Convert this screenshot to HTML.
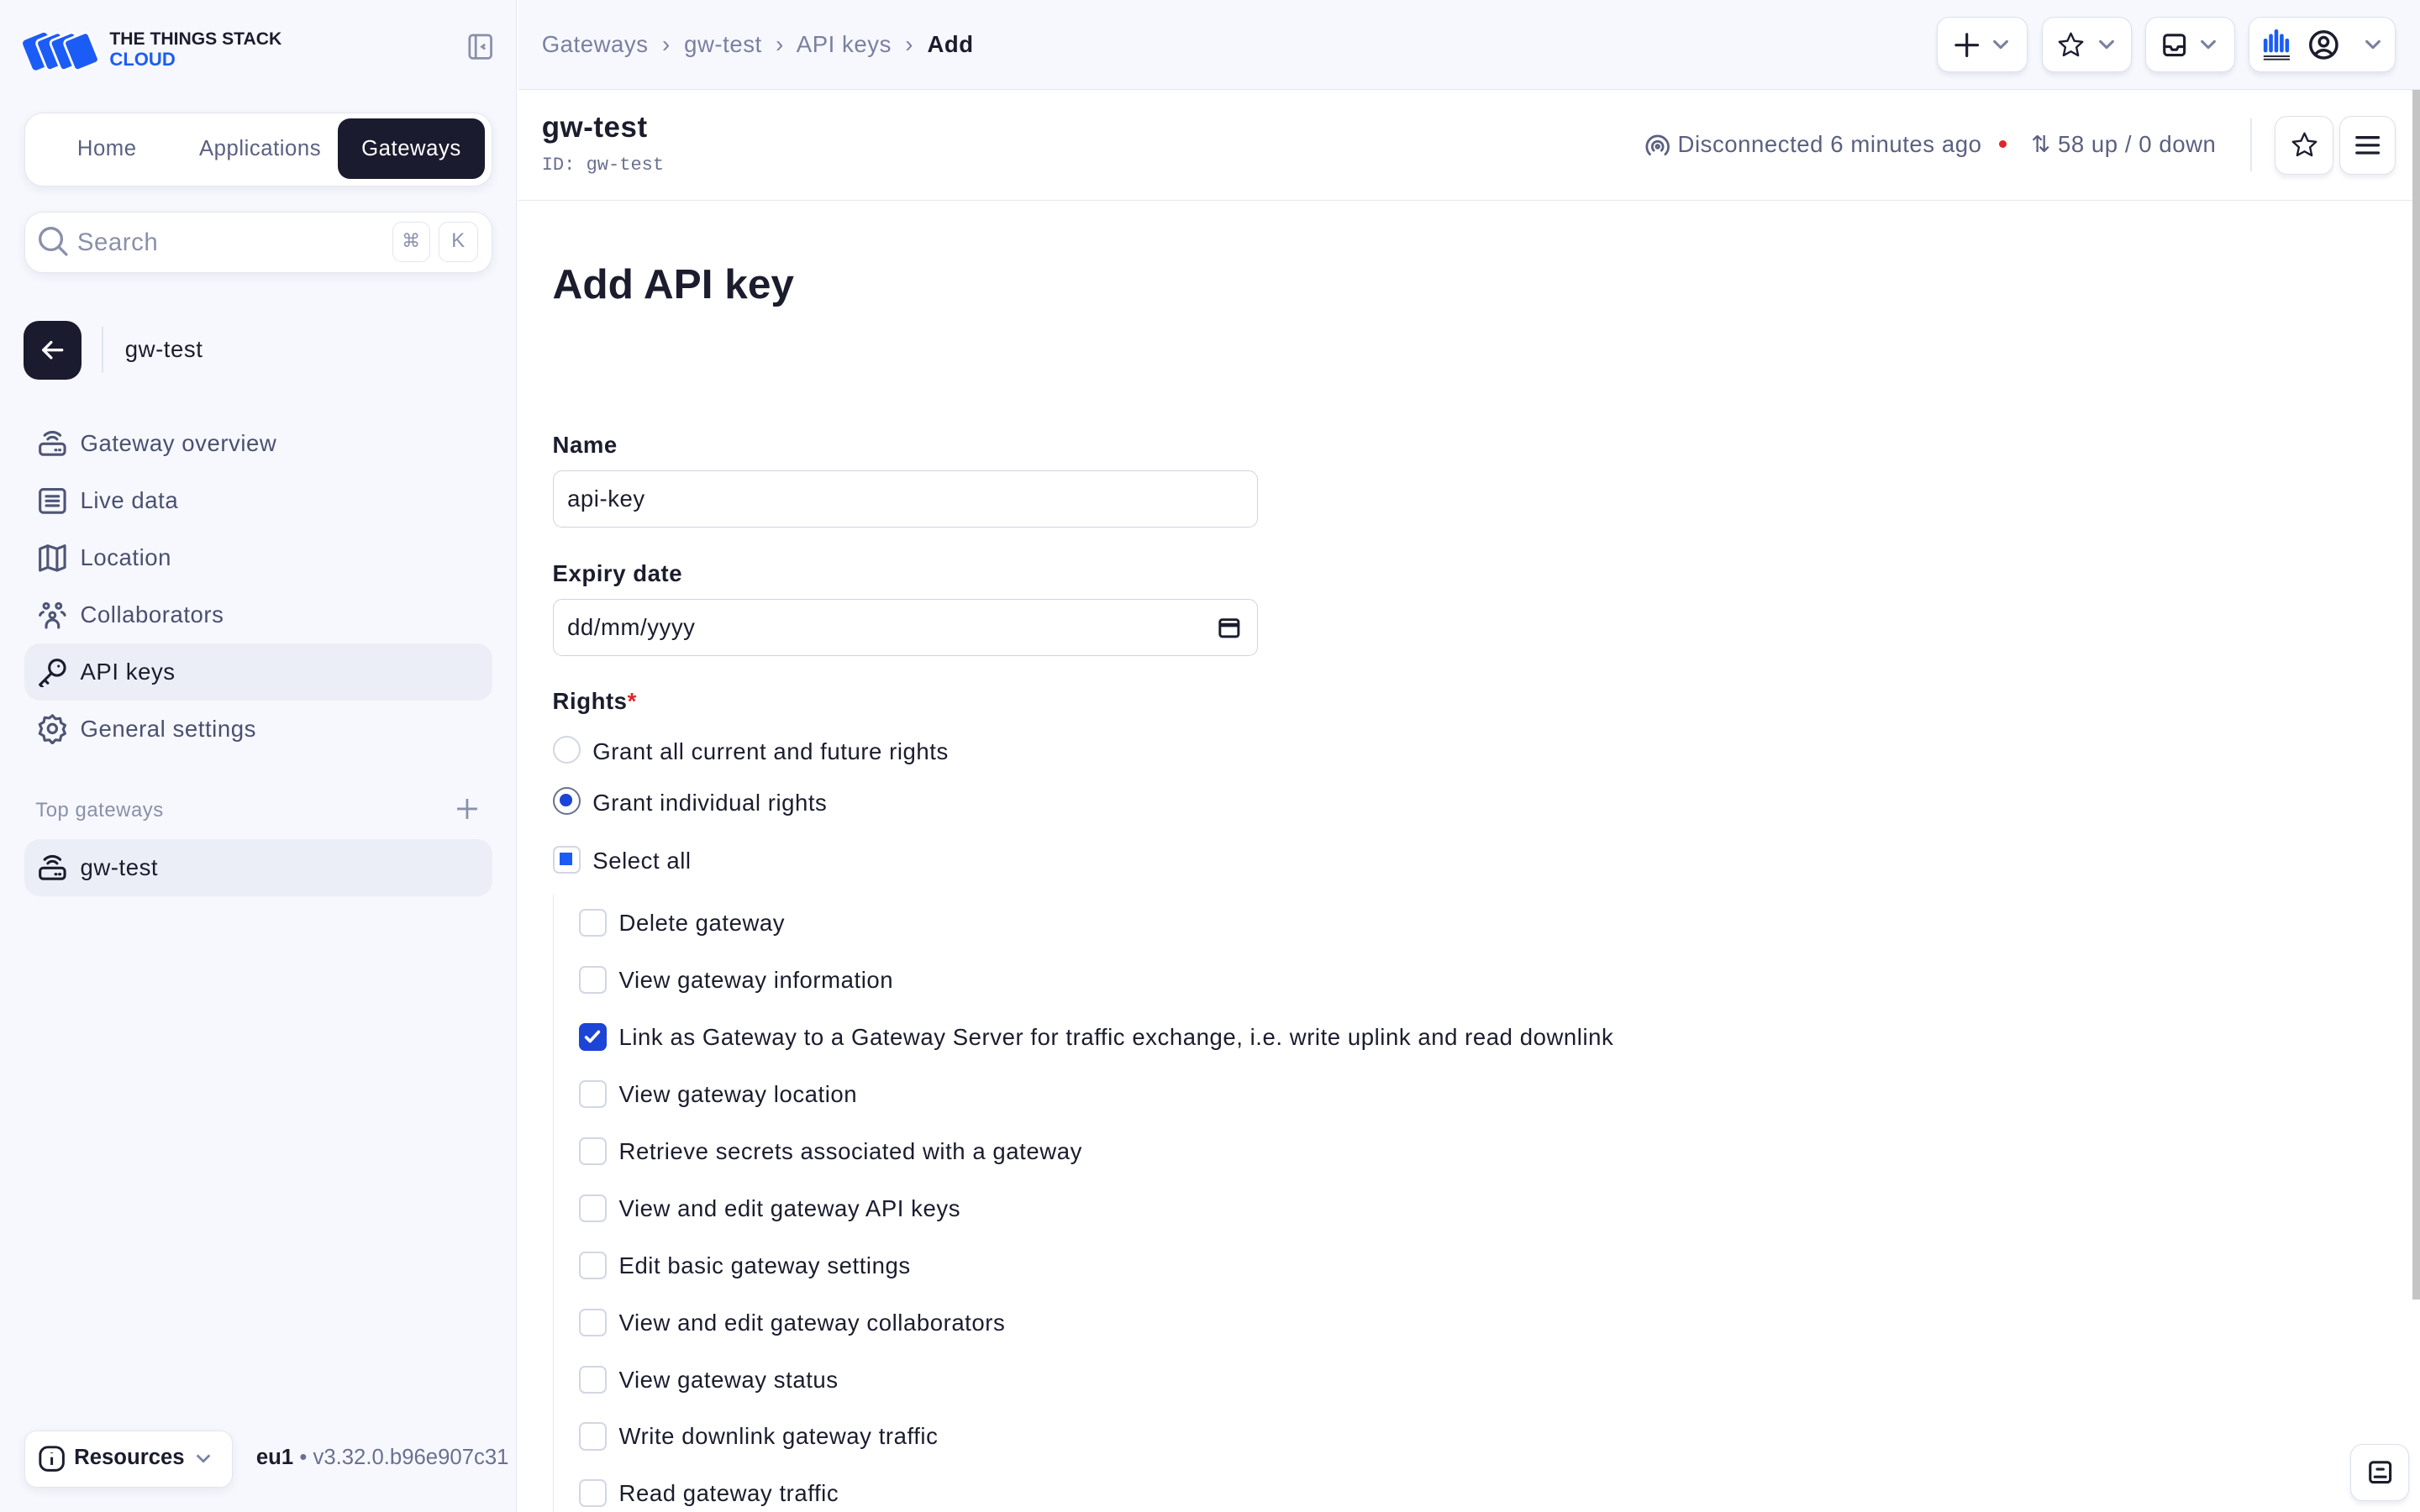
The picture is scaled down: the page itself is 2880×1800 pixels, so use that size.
<!DOCTYPE html>
<html><head><meta charset="utf-8"><style>
*{box-sizing:border-box;margin:0;padding:0}
html,body{width:2880px;height:1800px;overflow:hidden;background:#fff}
#z{zoom:1.836735;width:1568px;height:980px;position:relative;font-family:"Liberation Sans",sans-serif;color:#1b1d2e;overflow:hidden;letter-spacing:.3px}
.a{position:absolute}
.sb{left:0;top:0;width:335px;height:980px;background:#f6f8fd;border-right:1px solid #e4e7f1}
.card{background:#fff;border:1px solid #e3e6f0;border-radius:12px;box-shadow:0 2px 6px rgba(30,40,90,.07)}
.nav{left:16px;width:303px;height:37px;border-radius:10px;display:flex;align-items:center;padding-left:8px;font-size:15px;color:#4a5070}
.nav svg{width:20px;height:20px;margin-right:8px;fill:none;stroke:#4f5575;stroke-width:1.7;stroke-linecap:round;stroke-linejoin:round}
.nav.on{background:#eceef7;color:#1b1d2e}
.nav.on svg{stroke:#1b1d2e}
.tb{top:11px;height:36px;background:#fff;border:1px solid #dde0ec;border-radius:8px;box-shadow:0 2px 3px rgba(30,40,90,.08);display:flex;align-items:center;justify-content:center;gap:8px}
.tb svg{fill:none;stroke:#1b1d2e;stroke-width:1.7;stroke-linecap:round;stroke-linejoin:round}
.chev{width:12px;height:12px;stroke:#7a80a0 !important}
.lbl{left:358px;font-size:15px;font-weight:bold;color:#1b1d2e}
.inp{left:358px;width:457px;height:37px;border:1px solid #cfd3e2;border-radius:6px;font-size:15px;padding-left:9px;display:flex;align-items:center}
.cb{position:absolute;left:375px;width:18px;height:18px;border:1.5px solid #d3d6e4;border-radius:4px;background:#fff}
.ct{position:absolute;left:401px;font-size:15px;color:#1b1d2e;line-height:18px}
</style></head><body><div id="z">
<!-- sidebar -->
<div class="a sb"></div>
<svg class="a" style="left:14px;top:19px" width="52" height="28" viewBox="0 0 52 28"><g fill="#1c5cf6"><rect x="3" y="4" width="17" height="21" rx="2.5" transform="rotate(-22 11 14)"/><rect x="12" y="4" width="17" height="21" rx="2.5" transform="rotate(-22 20 14)" stroke="#fff" stroke-width="1.5"/><rect x="21" y="4" width="17" height="21" rx="2.5" transform="rotate(-22 29 14)" stroke="#fff" stroke-width="1.5"/><rect x="30" y="4" width="17" height="21" rx="2.5" transform="rotate(-22 38 14)" stroke="#fff" stroke-width="1.5"/></g></svg>
<div class="a" style="left:71px;top:19px;font-size:11.5px;font-weight:bold;letter-spacing:0;line-height:13px">THE THINGS STACK<br><span style="color:#1c5cf6;font-size:12px">CLOUD</span></div>
<svg class="a" style="left:303px;top:22px" width="16" height="17" viewBox="0 0 16 17" fill="none" stroke="#8a90aa" stroke-width="1.5"><rect x="1" y="1" width="14" height="15" rx="2"/><path d="M5 1v15M11 7l-2 1.5 2 1.5"/></svg>
<div class="a card" style="left:16px;top:73px;width:303px;height:48px"></div>
<div class="a" style="left:50px;top:89px;font-size:14px;color:#5a6080">Home</div>
<div class="a" style="left:129px;top:89px;font-size:14px;color:#5a6080">Applications</div>
<div class="a" style="left:219px;top:77px;width:95px;height:39px;background:#1a1b2f;border-radius:8px;color:#fff;font-size:14px;display:flex;align-items:center;justify-content:center">Gateways</div>
<div class="a card" style="left:16px;top:137px;width:303px;height:40px"></div>
<svg class="a" style="left:24px;top:146px" width="22" height="22" viewBox="0 0 22 22" fill="none" stroke="#8a90aa" stroke-width="1.8" stroke-linecap="round"><circle cx="9" cy="9" r="7"/><path d="M14 14l5 5"/></svg>
<div class="a" style="left:50px;top:148px;font-size:16px;color:#8a90aa">Search</div>
<div class="a" style="left:254px;top:144px;width:25px;height:26px;border:1px solid #e3e6f0;border-radius:6px;font-size:12px;color:#8a90aa;text-align:center;line-height:24px">⌘</div>
<div class="a" style="left:284px;top:144px;width:26px;height:26px;border:1px solid #e3e6f0;border-radius:6px;font-size:13px;color:#8a90aa;text-align:center;line-height:24px">K</div>
<div class="a" style="left:15px;top:208px;width:38px;height:38px;background:#1a1b2f;border-radius:10px"></div>
<svg class="a" style="left:26px;top:219px" width="16" height="16" viewBox="0 0 16 16" fill="none" stroke="#fff" stroke-width="1.8" stroke-linecap="round" stroke-linejoin="round"><path d="M14 8H2M7 3L2 8l5 5"/></svg>
<div class="a" style="left:66px;top:212px;width:1px;height:30px;background:#e1e4ee"></div>
<div class="a" style="left:81px;top:218px;font-size:15px">gw-test</div>

<div class="a nav" style="top:269px"><svg viewBox="0 0 20 20"><rect x="2" y="10" width="16" height="7" rx="2"/><path d="M7 7a4 4 0 0 1 6 0M5 4.5a7 7 0 0 1 10 0M10 10v0M12 14h.5M14.5 14h.5"/></svg>Gateway overview</div>
<div class="a nav" style="top:306px"><svg viewBox="0 0 20 20"><rect x="2" y="2.5" width="16" height="15" rx="2"/><path d="M6 7h8M6 10h8M6 13h8"/></svg>Live data</div>
<div class="a nav" style="top:343px"><svg viewBox="0 0 20 20"><path d="M2 4l5-2 6 2 5-2v14l-5 2-6-2-5 2zM7 2v14M13 4v14"/></svg>Location</div>
<div class="a nav" style="top:380px"><svg viewBox="0 0 20 20"><circle cx="6" cy="4" r="1.6"/><circle cx="14" cy="4" r="1.6"/><circle cx="10" cy="10" r="1.8"/><path d="M2 10a3 3 0 0 1 2-2M18 10a3 3 0 0 0-2-2M6 18v-1a4 4 0 0 1 8 0v1"/></svg>Collaborators</div>
<div class="a nav on" style="top:417px"><svg viewBox="0 0 20 20"><circle cx="13" cy="7" r="5"/><path d="M9.5 10.5L2 18l1.5 1.5M5 15l2 2M14 6h0"/></svg>API keys</div>
<div class="a nav" style="top:454px"><svg viewBox="0 0 20 20"><circle cx="10" cy="10" r="2.8"/><path d="M10 1.5l2 2.2 3-.3.6 2.9 2.6 1.5-1.2 2.7 1.2 2.7-2.6 1.5-.6 2.9-3-.3-2 2.2-2-2.2-3 .3-.6-2.9-2.6-1.5L3 10 1.8 7.3l2.6-1.5.6-2.9 3 .3z"/></svg>General settings</div>
<div class="a" style="left:23px;top:518px;font-size:13px;color:#8a90aa">Top gateways</div>
<svg class="a" style="left:296px;top:518px" width="13" height="13" viewBox="0 0 13 13" stroke="#8a90aa" stroke-width="1.5"><path d="M6.5 0v13M0 6.5h13"/></svg>
<div class="a nav on" style="top:544px"><svg viewBox="0 0 20 20"><rect x="2" y="10" width="16" height="7" rx="2"/><path d="M7 7a4 4 0 0 1 6 0M5 4.5a7 7 0 0 1 10 0M12 14h.5M14.5 14h.5"/></svg>gw-test</div>
<div class="a card" style="left:16px;top:927px;width:135px;height:37px;border-radius:8px"></div>
<svg class="a" style="left:25px;top:937px" width="17" height="17" viewBox="0 0 17 17" fill="none" stroke="#1b1d2e" stroke-width="1.6"><rect x="1" y="1" width="15" height="15" rx="5"/><path d="M8.5 7.5v5M8.5 4.5v.5"/></svg>
<div class="a" style="left:48px;top:937px;font-size:14px;font-weight:bold;letter-spacing:0">Resources</div>
<svg class="a chev" style="left:126px;top:939px" viewBox="0 0 12 12" fill="none" stroke="#7a80a0" stroke-width="1.5"><path d="M2 4l4 4 4-4"/></svg>
<div class="a" style="left:166px;top:937px;font-size:14px;color:#6a7090;letter-spacing:0">
<b style="color:#1b1d2e">eu1</b> • v3.32.0.b96e907c31</div>

<!-- top bar -->
<div class="a" style="left:336px;top:0;width:1232px;height:58px;background:#f6f8fd;border-bottom:1px solid #e4e7f1"></div>
<div class="a" style="left:351px;top:20px;font-size:15px;color:#7a80a0">Gateways &nbsp;›&nbsp; gw-test &nbsp;›&nbsp; API keys &nbsp;›&nbsp; <b style="color:#1b1d2e">Add</b></div>
<div class="a tb" style="left:1255px;width:59px"><svg width="16" height="16" viewBox="0 0 16 16"><path d="M8 1v14M1 8h14"/></svg><svg class="chev" viewBox="0 0 12 12"><path d="M2 4l4 4 4-4"/></svg></div>
<div class="a tb" style="left:1323px;width:58px"><svg width="18" height="18" viewBox="0 0 24 24"><path d="M12 2l3 6.5 7 .8-5.2 4.8 1.5 7L12 17.6 5.7 21l1.5-7L2 9.3l7-.8z"/></svg><svg class="chev" viewBox="0 0 12 12"><path d="M2 4l4 4 4-4"/></svg></div>
<div class="a tb" style="left:1390px;width:58px"><svg width="16" height="16" viewBox="0 0 16 16"><rect x="1.5" y="1.5" width="13" height="13" rx="2"/><path d="M1.5 9h4l1 2h3l1-2h4"/></svg><svg class="chev" viewBox="0 0 12 12"><path d="M2 4l4 4 4-4"/></svg></div>
<div class="a tb" style="left:1457px;width:95px;gap:10px"><svg width="20" height="22" viewBox="0 0 20 22" style="stroke:none"><g fill="#1c5cf6"><rect x="1" y="7" width="2.5" height="9" rx="1.2"/><rect x="4.5" y="4" width="2.5" height="12" rx="1.2"/><rect x="8" y="1" width="2.5" height="15" rx="1.2"/><rect x="11.5" y="4" width="2.5" height="12" rx="1.2"/><rect x="15" y="7" width="2.5" height="9" rx="1.2"/></g><rect x="1" y="18" width="17" height="1" fill="#1b1d2e"/><rect x="1" y="20" width="17" height="1" fill="#1b1d2e"/></svg><svg width="20" height="20" viewBox="0 0 20 20" style="stroke-width:1.9"><circle cx="10" cy="10" r="8.5"/><circle cx="10" cy="8" r="2.8"/><path d="M4.5 16.5a6.5 6.5 0 0 1 11 0"/></svg><svg class="chev" viewBox="0 0 12 12" style="margin-left:6px"><path d="M2 4l4 4 4-4"/></svg></div>

<!-- header -->
<div class="a" style="left:336px;top:58px;width:1227px;height:72px;background:#fff;border-bottom:1px solid #e4e7f1"></div>
<div class="a" style="left:351px;top:72px;font-size:19px;font-weight:bold">gw-test</div>
<div class="a" style="left:351px;top:100px;font-size:12px;color:#6a7090;font-family:'Liberation Mono',monospace;letter-spacing:0">ID: gw-test</div>
<svg class="a" style="left:1066px;top:86px" width="16" height="16" viewBox="0 0 16 16" fill="none" stroke="#5a6080" stroke-width="1.5" stroke-linecap="round"><path d="M3 14a7 7 0 1 1 10 0M5.5 11.5a3.5 3.5 0 1 1 5 0"/><circle cx="8" cy="9" r="1"/></svg>
<div class="a" style="left:1087px;top:85px;font-size:15px;color:#5a6080">Disconnected 6 minutes ago</div>
<div class="a" style="left:1295px;top:91px;width:5px;height:5px;border-radius:50%;background:#e0242b"></div>
<div class="a" style="left:1316px;top:85px;font-size:15px;color:#5a6080">⇅ 58 up / 0 down</div>
<div class="a" style="left:1458px;top:77px;width:1px;height:34px;background:#e4e7f1"></div>
<div class="a tb" style="left:1474px;top:75px;width:38px;height:38px"><svg width="18" height="18" viewBox="0 0 24 24"><path d="M12 2l3 6.5 7 .8-5.2 4.8 1.5 7L12 17.6 5.7 21l1.5-7L2 9.3l7-.8z"/></svg></div>
<div class="a tb" style="left:1516px;top:75px;width:36px;height:38px"><svg width="16" height="14" viewBox="0 0 16 14" style="stroke-width:1.8"><path d="M1 2h14M1 7h14M1 12h14"/></svg></div>
<div class="a" style="left:1563px;top:58px;width:5px;height:784px;background:#c4c4c4"></div>

<!-- form -->
<div class="a" style="left:358px;top:168px;font-size:27px;font-weight:bold;letter-spacing:0">Add API key</div>
<div class="a lbl" style="top:280px">Name</div>
<div class="a inp" style="top:305px">api-key</div>
<div class="a lbl" style="top:363px">Expiry date</div>
<div class="a inp" style="top:388px">dd/mm/yyyy<svg style="position:absolute;right:11px;top:11px" width="14" height="14" viewBox="0 0 14 14" fill="none" stroke="#1b1d2e" stroke-width="1.6"><rect x="1" y="2" width="12" height="11" rx="1.5"/><path d="M1 5.5h12" stroke-width="2.5"/></svg></div>
<div class="a lbl" style="top:446px">Rights<span style="color:#e0242b">*</span></div>
<div class="a" style="left:358px;top:477px;width:18px;height:18px;border-radius:50%;border:1.5px solid #d3d6e4"></div>
<div class="ct" style="left:384px;top:478px">Grant all current and future rights</div>
<div class="a" style="left:358px;top:510px;width:18px;height:18px;border-radius:50%;border:1.5px solid #6a7090"><div style="position:absolute;left:3.5px;top:3.5px;width:8px;height:8px;border-radius:50%;background:#1c44d6"></div></div>
<div class="ct" style="left:384px;top:511px">Grant individual rights</div>
<div class="a" style="left:358px;top:548px;width:18px;height:18px;border-radius:4px;border:1.5px solid #d3d6e4"><div style="position:absolute;left:3.5px;top:3.5px;width:8px;height:8px;background:#1c5cf6"></div></div>
<div class="ct" style="left:384px;top:549px">Select all</div>
<div class="a" style="left:358px;top:580px;width:1px;height:400px;background:#e4e7f1"></div>

<div class="cb" style="top:589px"></div><div class="ct" style="top:589px">Delete gateway</div>
<div class="cb" style="top:626px"></div><div class="ct" style="top:626px">View gateway information</div>
<div class="cb" style="top:663px;background:#1c44d6;border-color:#1c44d6"><svg style="position:absolute;left:2px;top:2px" width="12" height="12" viewBox="0 0 12 12" fill="none" stroke="#fff" stroke-width="2" stroke-linecap="round" stroke-linejoin="round"><path d="M2 6.5l2.5 2.5L10 3"/></svg></div><div class="ct" style="top:663px">Link as Gateway to a Gateway Server for traffic exchange, i.e. write uplink and read downlink</div>
<div class="cb" style="top:700px"></div><div class="ct" style="top:700px">View gateway location</div>
<div class="cb" style="top:737px"></div><div class="ct" style="top:737px">Retrieve secrets associated with a gateway</div>
<div class="cb" style="top:774px"></div><div class="ct" style="top:774px">View and edit gateway API keys</div>
<div class="cb" style="top:811px"></div><div class="ct" style="top:811px">Edit basic gateway settings</div>
<div class="cb" style="top:848px"></div><div class="ct" style="top:848px">View and edit gateway collaborators</div>
<div class="cb" style="top:885px"></div><div class="ct" style="top:885px">View gateway status</div>
<div class="cb" style="top:922px"></div><div class="ct" style="top:922px">Write downlink gateway traffic</div>
<div class="cb" style="top:959px"></div><div class="ct" style="top:959px">Read gateway traffic</div>

<div class="a tb" style="left:1523px;top:936px;width:38px;height:37px"><svg width="16" height="16" viewBox="0 0 16 16"><rect x="1.5" y="1.5" width="13" height="13" rx="2"/><path d="M4.5 11h7M6 6h4"/></svg></div>
</div></body></html>
